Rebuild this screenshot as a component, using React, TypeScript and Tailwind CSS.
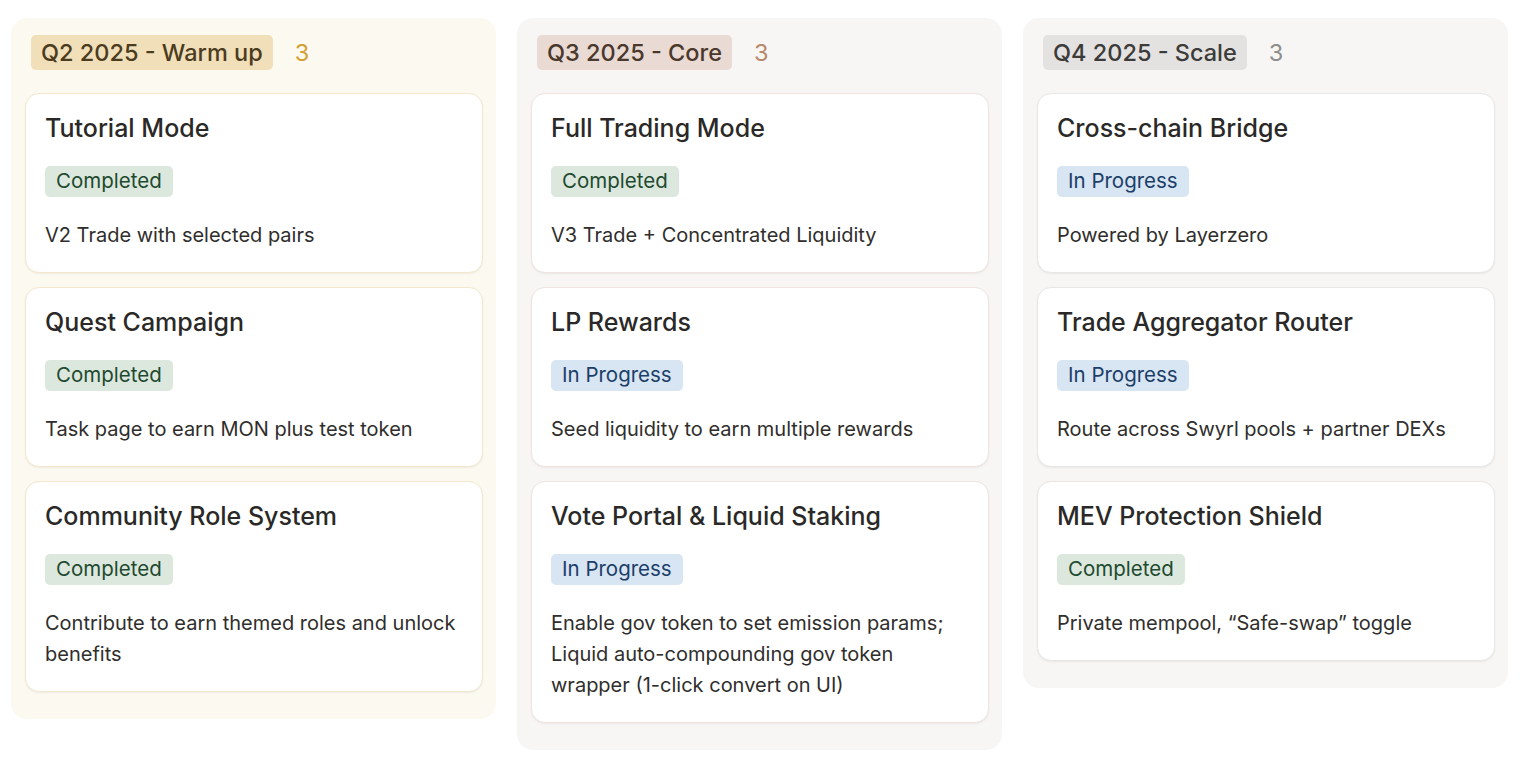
type Status = "Completed" | "In Progress"

interface Item {
  title: string
  status: Status
  desc: string[]
}

interface Column {
  name: string
  items: Item[]
  colBg: string
  tagBg: string
  tagText: string
  countText: string
  cardBorder: string
}

const columns: Column[] = [
  {
    name: "Q2 2025 - Warm up",
    colBg: "bg-[#fcf9f1]",
    tagBg: "bg-[#f1dfba]",
    tagText: "text-[#4b3c20]",
    countText: "text-[#d4a033]",
    cardBorder: "border-[#f3e8cd]",
    items: [
      { title: "Tutorial Mode", status: "Completed", desc: ["V2 Trade with selected pairs"] },
      { title: "Quest Campaign", status: "Completed", desc: ["Task page to earn MON plus test token"] },
      {
        title: "Community Role System",
        status: "Completed",
        desc: ["Contribute to earn themed roles and unlock benefits"],
      },
    ],
  },
  {
    name: "Q3 2025 - Core",
    colBg: "bg-[#f8f6f5]",
    tagBg: "bg-[#e9dad3]",
    tagText: "text-[#4a382d]",
    countText: "text-[#b98a69]",
    cardBorder: "border-[#f0e3e0]",
    items: [
      { title: "Full Trading Mode", status: "Completed", desc: ["V3 Trade + Concentrated Liquidity"] },
      { title: "LP Rewards", status: "In Progress", desc: ["Seed liquidity to earn multiple rewards"] },
      {
        title: "Vote Portal & Liquid Staking",
        status: "In Progress",
        desc: [
          "Enable gov token to set emission params;",
          "Liquid auto-compounding gov token",
          "wrapper (1-click convert on UI)",
        ],
      },
    ],
  },
  {
    name: "Q4 2025 - Scale",
    colBg: "bg-[#f7f6f4]",
    tagBg: "bg-[#e3e2e0]",
    tagText: "text-[#3c3b39]",
    countText: "text-[#8f8e8c]",
    cardBorder: "border-[#e8e7e5]",
    items: [
      { title: "Cross-chain Bridge", status: "In Progress", desc: ["Powered by Layerzero"] },
      { title: "Trade Aggregator Router", status: "In Progress", desc: ["Route across Swyrl pools + partner DEXs"] },
      { title: "MEV Protection Shield", status: "Completed", desc: ["Private mempool, \u201cSafe-swap\u201d toggle"] },
    ],
  },
]

function StatusTag({ status }: { status: Status }) {
  const done = status === "Completed"
  return (
    <span
      className={`inline-flex h-[31px] items-center rounded-[5px] px-[11px] text-[20.5px] leading-none ${
        done ? "bg-[#dce8de] text-[#1f4a30]" : "bg-[#d8e5f2] text-[#1c3f69]"
      }`}
    >
      {status}
    </span>
  )
}

function Card({ item, border }: { item: Item; border: string }) {
  return (
    <div
      className={`rounded-[14px] border bg-white px-[19px] pt-[18px] pb-[21px] shadow-[0_1px_2px_rgba(15,15,15,0.06)] ${border}`}
    >
      <h3 className="text-[25px] leading-[32px] font-medium text-[#2a2927]">{item.title}</h3>
      <div className="mt-[22px] flex">
        <StatusTag status={item.status} />
      </div>
      <p className="mt-[23px] text-[20px] leading-[31px] text-[#2f2e2c]">
        {item.desc.map((line, i) => (
          <span key={i} className="block">
            {line}
          </span>
        ))}
      </p>
    </div>
  )
}

export default function App() {
  return (
    <div
      className="min-h-screen bg-white pt-[18px] pl-[11px]"
      style={{ fontFamily: "Inter, 'Noto Sans', sans-serif" }}
    >
      <div className="flex items-start gap-[21px]">
        {columns.map((col) => (
          <div
            key={col.name}
            className={`w-[485px] rounded-[16px] pl-[14px] pr-[13px] pt-[17px] pb-[27px] ${col.colBg}`}
          >
            <div className="flex items-center gap-[22px] px-[6px]">
              <span
                className={`inline-flex h-[35px] items-center rounded-[5px] px-[10px] text-[23.5px] leading-none font-medium ${col.tagBg} ${col.tagText}`}
              >
                {col.name}
              </span>
              <span className={`text-[23.5px] leading-none ${col.countText}`}>{col.items.length}</span>
            </div>
            <div className="mt-[23px] flex flex-col gap-[14px]">
              {col.items.map((item) => (
                <Card key={item.title} item={item} border={col.cardBorder} />
              ))}
            </div>
          </div>
        ))}
      </div>
    </div>
  )
}
